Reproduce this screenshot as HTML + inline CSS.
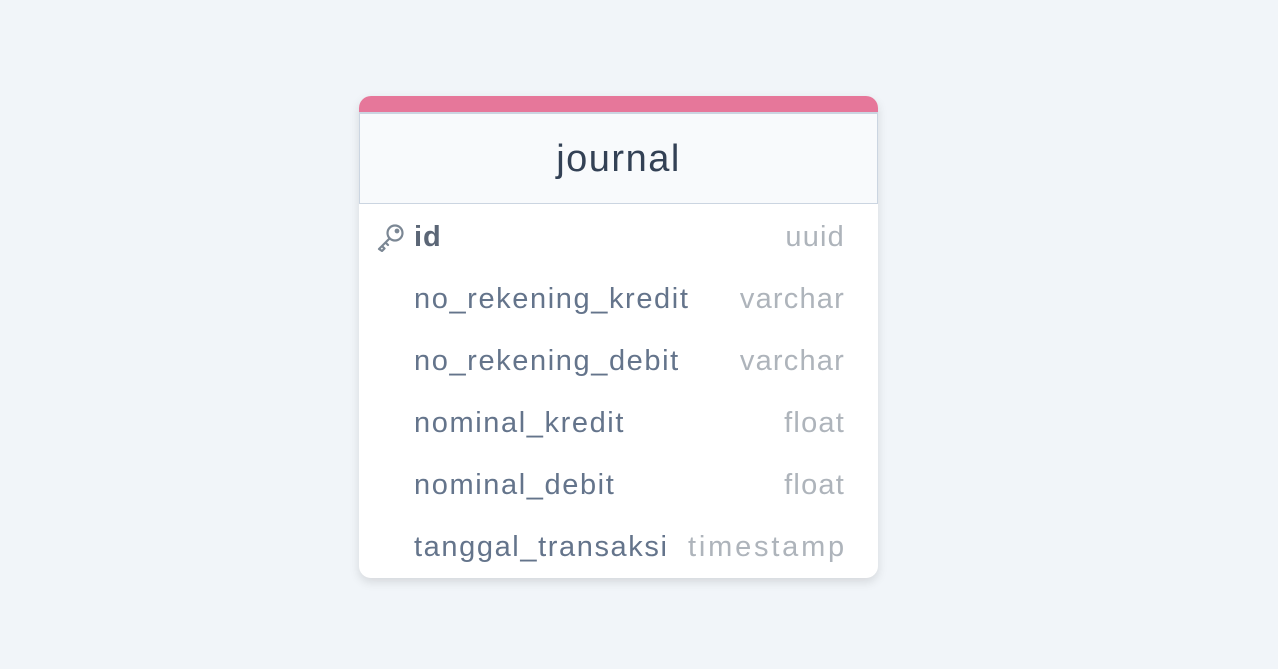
<!DOCTYPE html>
<html><head><style>
body{margin:0;width:1278px;height:669px;background:#f1f5f9;font-family:"Liberation Sans",sans-serif;position:relative;overflow:hidden}
.card{position:absolute;left:359px;top:96px;width:519px;height:482px;background:#fff;border-radius:12px;overflow:hidden;box-shadow:0 4px 10px rgba(0,0,0,.12)}
.top{height:16px;background:#e6779a}
.head{height:89px;background:#f8fafc;border:1px solid #cbd5e1;border-top:2px solid #cbd5e1;text-align:center;line-height:91px;font-size:38px;letter-spacing:1.5px;color:#334155}
.row{position:absolute;left:0;width:519px;height:62px;line-height:66px;font-size:29px;letter-spacing:1.6px}
.n{position:absolute;left:55px;color:#64748b}
.t{position:absolute;right:33px;color:#aeb4bb;letter-spacing:1.2px}
</style></head><body>
<div class="card">
<div class="top"></div>
<div class="head">journal</div>
<div class="row" style="top:108px"><svg style="position:absolute;left:17px;top:18px" width="30" height="30" viewBox="0 0 30 30" fill="none" stroke="#7b8794" stroke-width="2.2" stroke-linecap="round" stroke-linejoin="round"><circle cx="19" cy="11" r="7.5"/><circle cx="21" cy="9" r="1.3" fill="#7b8794"/><path d="M13.5 16.5 L3 27 L6 29 L8.5 26.5 L6.5 24.5 M10 21 L12 23"/></svg><span class="n" style="font-weight:bold;color:#5b6676;letter-spacing:1px">id</span><span class="t">uuid</span></div>
<div class="row" style="top:170px"><span class="n">no_rekening_kredit</span><span class="t">varchar</span></div>
<div class="row" style="top:232px"><span class="n">no_rekening_debit</span><span class="t">varchar</span></div>
<div class="row" style="top:294px"><span class="n">nominal_kredit</span><span class="t">float</span></div>
<div class="row" style="top:356px"><span class="n">nominal_debit</span><span class="t">float</span></div>
<div class="row" style="top:418px"><span class="n">tanggal_transaksi</span><span class="t" style="letter-spacing:2.8px;right:31px">timestamp</span></div>
</div>
</body></html>
